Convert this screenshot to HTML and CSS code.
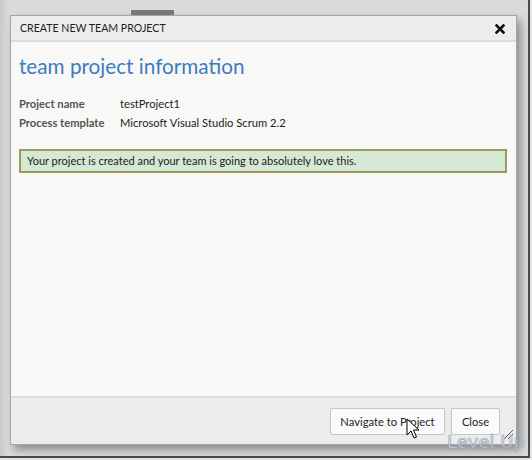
FILE: index.html
```html
<!DOCTYPE html>
<html>
<head>
<meta charset="utf-8">
<link rel="stylesheet" href="styles.css">
</head>
<body>
<div class="frame">
  <div class="backdrop-tab"></div>
  <div class="dialog">
    <div class="titlebar">
      <span class="title">CREATE NEW TEAM PROJECT</span>
      <svg class="close-x" width="10" height="10" viewBox="0 0 10 10"><path d="M1.5 1.5 L8.5 8.5 M8.5 1.5 L1.5 8.5" stroke="#111" stroke-width="2.6" stroke-linecap="square"/></svg>
    </div>
    <div class="content">
      <h1 class="heading">team project information</h1>
      <div class="info">
        <div class="label">Project name</div><div class="value">testProject1</div>
        <div class="label">Process template</div><div class="value">Microsoft Visual Studio Scrum 2.2</div>
      </div>
      <div class="success">Your project is created and your team is going to absolutely love this.</div>
    </div>
    <div class="footer">
      <button class="btn btn-nav">Navigate to Project</button>
      <button class="btn btn-close">Close</button>
    </div>
    <svg class="grip" width="12" height="12" viewBox="0 0 12 12"><path d="M11 2 L2 11 M11 6 L6 11" stroke="#555" stroke-width="1"/></svg>
  </div>
  <svg class="cursor" width="14" height="22" viewBox="0 0 14 22"><path d="M1 1 L1 17 L5 13 L8 20 L10.5 19 L7.5 12 L13 12 Z" fill="#fff" stroke="#000" stroke-width="1" stroke-linejoin="miter"/></svg>
  <div class="watermark">Level Up</div>
</div>
</body>
</html>
```
FILE: styles.css
```css
html, body {
  margin: 0;
  padding: 0;
}
body {
  width: 532px;
  height: 460px;
  background: #e6e6e6;
  font-family: Lato, "Open Sans", sans-serif;
  overflow: hidden;
}
.frame {
  position: relative;
  border-right: 2px solid #4a4a4a;
  border-bottom: 2px solid #4a4a4a;
  background: linear-gradient(to right, #c9c9c9 0px, #dadada 8px, #dadada 100%);
  padding: 15px 0 0 10px;
  box-sizing: content-box;
  width: 518px;
  height: 441px;
}
.backdrop-tab {
  position: absolute;
  left: 131px;
  top: 10px;
  width: 43px;
  height: 5px;
  background: #7a7a7a;
}
.dialog {
  position: relative;
  width: 505px;
  height: 428px;
  background: #f8f8f6;
  border: 1px solid #a6a6a6;
  box-shadow: 4px 5px 8px rgba(0,0,0,0.35);
  display: flex;
  flex-direction: column;
}
.titlebar {
  height: 24px;
  background: #ececec;
  border-bottom: 2px solid #dcdcdc;
  display: flex;
  align-items: center;
  justify-content: space-between;
  padding: 0 11px 0 9px;
}
.title {
  font-size: 10.6px;
  color: #1e1e1e;
  font-weight: 400;
}
.close-x {
  display: block;
  margin-top: 2px;
}
.content {
  flex: 1;
  padding: 0 9px 0 8px;
}
.heading {
  margin: 9px 0 0 0;
  font-weight: 400;
  font-size: 20.7px;
  color: #3d7cc0;
  line-height: 30px;
}
.info {
  display: grid;
  grid-template-columns: 101px auto;
  row-gap: 2px;
  margin-top: 14px;
  font-size: 11.2px;
  line-height: 17px;
}
.label {
  font-weight: 700;
  color: #555;
}
.value {
  color: #222;
}
.success {
  margin-top: 18px;
  background: #d4e8d3;
  border: 2px solid #999a5c;
  font-size: 11px;
  color: #222;
  line-height: 18px;
  padding: 1px 6px 1px 6px;
}
.footer {
  height: 46px;
  background: #ececec;
  border-top: 2px solid #dedede;
  display: flex;
  justify-content: flex-end;
  align-items: center;
  gap: 6px;
  padding: 0 16px 0 0;
}
.btn {
  font-family: Lato, "Open Sans", sans-serif;
  font-size: 11.2px;
  color: #222;
  background: #fafafa;
  border: 1px solid #c4c4c4;
  border-radius: 2px;
  height: 27px;
  margin-top: 1px;
  white-space: nowrap;
  padding: 0;
}
.btn-nav {
  width: 115px;
}
.btn-close {
  width: 49px;
}
.grip {
  position: absolute;
  right: 2px;
  bottom: 4px;
}
.cursor {
  position: absolute;
  left: 406px;
  top: 418px;
}
.watermark {
  position: absolute;
  left: 447px;
  top: 430px;
  white-space: nowrap;
  font-family: "DejaVu Sans", sans-serif;
  font-size: 18px;
  line-height: 24px;
  font-weight: 400;
  color: rgba(255,255,255,0.55);
  -webkit-text-stroke: 0.7px #8f9bb0;
}
```
